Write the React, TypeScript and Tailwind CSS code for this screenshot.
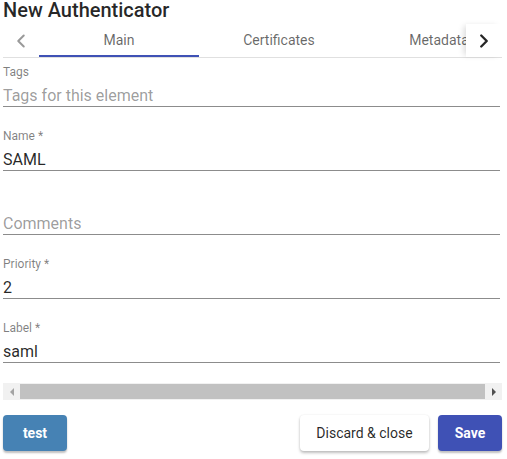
import { ChevronLeft, ChevronRight } from "lucide-react";

type FieldProps = {
  label?: string;
  value?: string;
  placeholder?: string;
  first?: boolean;
};

const Field = ({ label, value, placeholder, first }: FieldProps) => (
  <div className={first ? "pt-[7px]" : "pt-[22px]"}>
    <div className="h-[14px] text-[12px] leading-[14px] text-black/50">{label ?? ""}</div>
    <div className="mt-[7px] w-[497px] border-b border-black/45">
      <div
        className={
          "h-[20px] text-[16px] leading-[20px] " +
          (value ? "text-black/85" : "text-black/40")
        }
      >
        {value ?? placeholder}
      </div>
    </div>
  </div>
);

export default function App() {
  const tabs = ["Main", "Certificates", "Metadata"];

  return (
    <div className="w-[507px] h-[459px] bg-white pl-[3px] pr-[5px] font-['Roboto',sans-serif] overflow-hidden">
      {/* Title */}
      <h2 className="h-6 text-[20px] leading-[20px] font-medium text-black/85">
        New Authenticator
      </h2>

      {/* Tab header */}
      <div className="relative flex h-[34px] border-b border-black/12 w-[499px]">
        <div className="flex w-9 shrink-0 items-center justify-center text-black/40">
          <ChevronLeft className="h-[22px] w-[22px]" strokeWidth={2.2} />
        </div>
        <div className="flex flex-1 overflow-hidden">
          {tabs.map((t, i) => (
            <div
              key={t}
              className="relative flex w-[160px] shrink-0 items-center justify-center text-[14px] text-black/60"
            >
              {t}
              {i === 0 && <div className="absolute bottom-0 left-0 right-0 h-[2px] bg-[#3f51b5]" />}
            </div>
          ))}
        </div>
        <div className="flex w-9 shrink-0 items-center justify-center bg-white text-black/85 shadow-[-4px_0_6px_-2px_rgba(0,0,0,0.15)]">
          <ChevronRight className="h-[22px] w-[22px]" strokeWidth={2.6} />
        </div>
      </div>

      {/* Form */}
      <Field first label="Tags" placeholder="Tags for this element" />
      <Field label="Name *" value="SAML" />
      <Field placeholder="Comments" />
      <Field label="Priority *" value="2" />
      <Field label="Label *" value="saml" />

      {/* Horizontal scrollbar */}
      <div className="mt-[20px] flex h-[17px] w-[499px] bg-[#f1f1f1]">
        <div className="flex w-[17px] items-center justify-center">
          <div className="h-0 w-0 border-y-[4px] border-r-[4px] border-y-transparent border-r-[#a3a3a3]" />
        </div>
        <div className="my-[1px] flex-1 bg-[#c1c1c1]" />
        <div className="flex w-[17px] items-center justify-center">
          <div className="h-0 w-0 border-y-[4px] border-l-[4px] border-y-transparent border-l-[#505050]" />
        </div>
      </div>

      {/* Actions */}
      <div className="mt-[15px] flex w-[499px] items-center">
        <button className="h-9 w-16 rounded bg-[#4682b4] text-[14px] font-bold text-white shadow-[0_2px_2px_rgba(0,0,0,0.25)]">
          test
        </button>
        <div className="flex-1" />
        <button className="h-9 w-[129px] rounded bg-white text-[14px] font-normal text-black/85 shadow-[0_2px_3px_rgba(0,0,0,0.25),0_0_2px_rgba(0,0,0,0.08)]">
          Discard &amp; close
        </button>
        <button className="ml-[9px] h-9 w-16 rounded bg-[#3f51b5] text-[14px] font-bold text-white shadow-[0_2px_2px_rgba(0,0,0,0.25)]">
          Save
        </button>
      </div>
    </div>
  );
}
